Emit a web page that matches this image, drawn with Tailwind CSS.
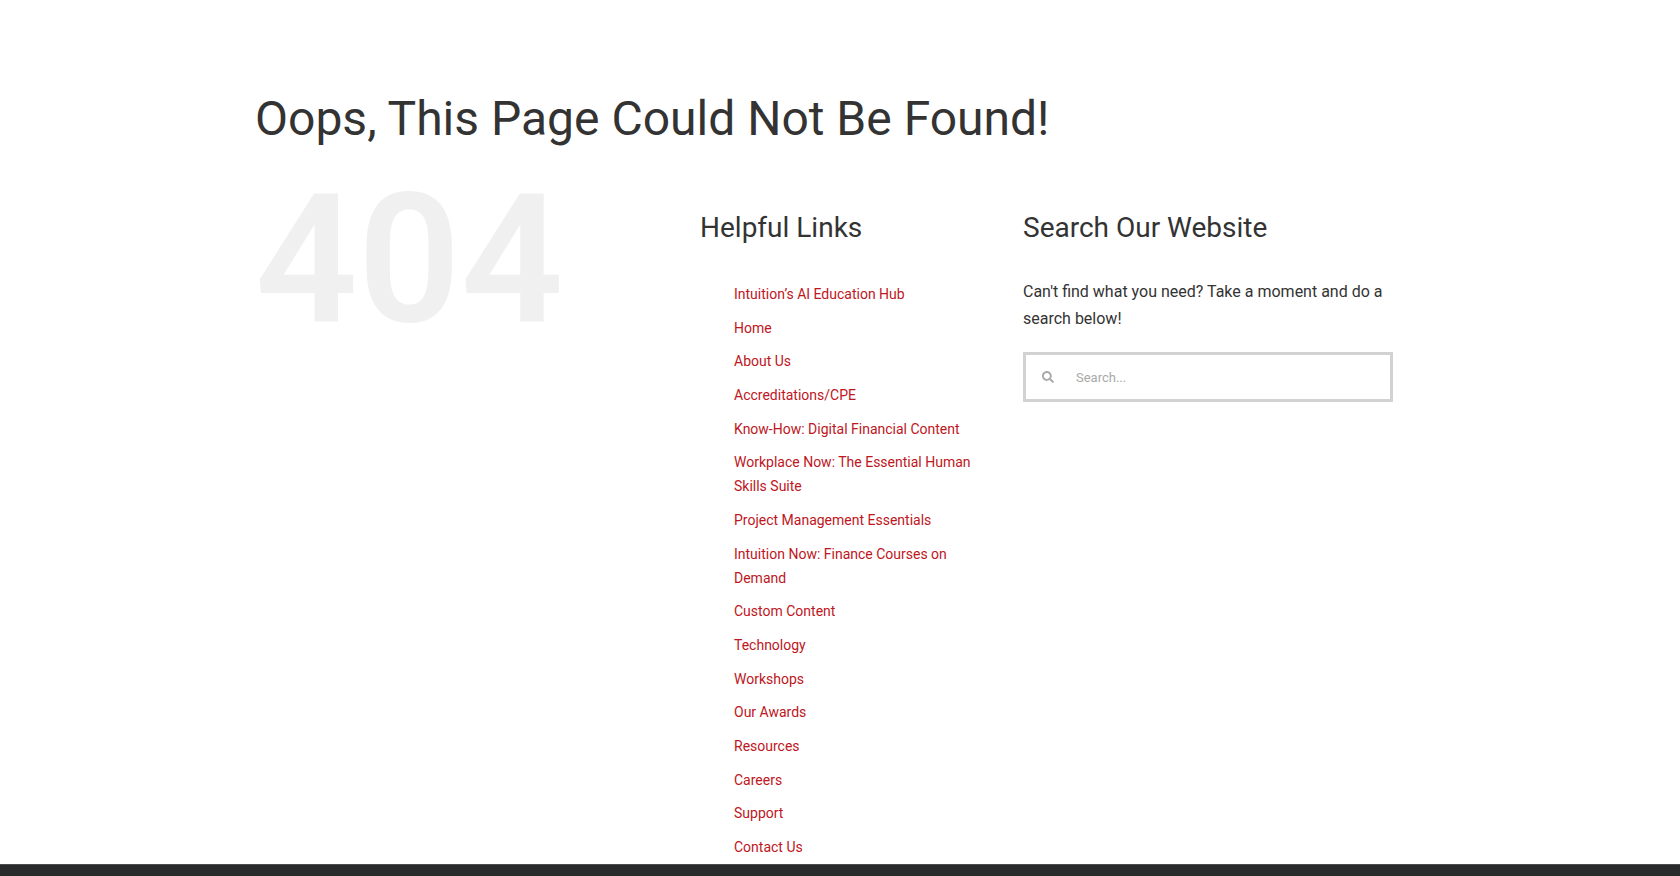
<!DOCTYPE html>
<html lang="en">
<head>
<meta charset="utf-8">
<meta name="viewport" content="width=device-width, initial-scale=1">
<title>Page not found</title>
<script src="https://cdn.jsdelivr.net/npm/@tailwindcss/browser@4"></script>
</head>
<body class="flex min-h-screen flex-col bg-white font-['Roboto',sans-serif] text-[#333333]">
<main class="mx-auto flex w-full max-w-[1170px] flex-1 flex-col px-4 pt-[87px] pb-[5px] xl:pr-8 xl:pl-0">
  <h1 class="text-5xl leading-[64px]">Oops, This Page Could Not Be Found!</h1>
  <div class="mt-8 grid flex-1 grid-cols-1 gap-x-12 md:grid-cols-[397fr_275fr_370fr]">
    <div class="text-[180px] leading-[154px] font-semibold text-[#f0f0f0]">404</div>
    <section class="flex flex-col">
      <h2 class="mt-[27px] text-[28px] leading-9">Helpful Links</h2>
      <ul class="mt-9 flex flex-1 flex-col justify-between gap-2 pl-[34px] text-sm leading-6 text-[#be1622]">
        <li><a href="#">Intuition’s AI Education Hub</a></li>
        <li><a href="#">Home</a></li>
        <li><a href="#">About Us</a></li>
        <li><a href="#">Accreditations/CPE</a></li>
        <li><a href="#">Know-How: Digital Financial Content</a></li>
        <li><a href="#">Workplace Now: The Essential Human Skills Suite</a></li>
        <li><a href="#">Project Management Essentials</a></li>
        <li><a href="#">Intuition Now: Finance Courses on Demand</a></li>
        <li><a href="#">Custom Content</a></li>
        <li><a href="#">Technology</a></li>
        <li><a href="#">Workshops</a></li>
        <li><a href="#">Our Awards</a></li>
        <li><a href="#">Resources</a></li>
        <li><a href="#">Careers</a></li>
        <li><a href="#">Support</a></li>
        <li><a href="#">Contact Us</a></li>
      </ul>
    </section>
    <section>
      <h2 class="mt-[27px] text-[28px] leading-9">Search Our Website</h2>
      <p class="mt-8 text-base leading-[27px]">Can't find what you need? Take a moment and do a search below!</p>
      <form class="mt-5 flex h-[50px] border-[3px] border-[#d2d2d2]" role="search">
        <button type="submit" aria-label="Search" class="flex w-11 items-center justify-center text-[#aaa9a9]">
          <svg class="size-3" viewBox="0 0 512 512" fill="currentColor" aria-hidden="true"><path d="M505 442.700 405.300 343c-4.500-4.500-10.600-7-17-7H372c27.600-35.300 44-79.700 44-128C416 93.100 322.900 0 208 0S0 93.100 0 208s93.100 208 208 208c48.300 0 92.700-16.400 128-44v16.300c0 6.400 2.500 12.500 7 17l99.700 99.700c9.400 9.400 24.600 9.400 33.900 0l28.300-28.300c9.400-9.400 9.400-24.600.1-34zM208 336c-70.700 0-128-57.200-128-128 0-70.700 57.200-128 128-128 70.700 0 128 57.200 128 128 0 70.700-57.200 128-128 128z"/></svg>
        </button>
        <input type="search" aria-label="Search" placeholder="Search..." class="min-w-0 flex-1 px-1.5 pt-0.5 text-[13px] outline-none placeholder:text-[#aaa9a9]">
      </form>
    </section>
  </div>
</main>
<footer class="h-3 border-t border-[#4b4c4d] bg-[#282a2b]"></footer>
</body>
</html>
